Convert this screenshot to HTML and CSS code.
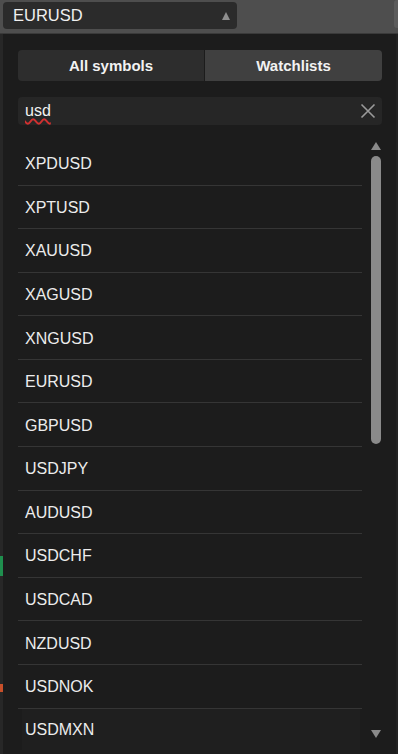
FILE: index.html
```html
<!DOCTYPE html>
<html>
<head>
<meta charset="utf-8">
<link rel="stylesheet" href="styles.css">
</head>
<body>
<div class="topbar">
  <div class="symbol-select">
    <span class="symbol-name">EURUSD</span>
    <span class="caret-up"></span>
  </div>
  <div class="topbar-right"></div>
</div>
<div class="page">
  <div class="edge">
    <span class="mark mark-green"></span>
    <span class="mark mark-orange"></span>
  </div>
  <div class="panel">
    <div class="tabs">
      <div class="tab tab-left">All symbols</div>
      <div class="tab tab-right">Watchlists</div>
    </div>
    <div class="search">
      <span class="query">usd</span>
      <svg class="clear" width="16" height="16" viewBox="0 0 16 16"><path d="M1.5 1.5 L14.5 14.5 M14.5 1.5 L1.5 14.5" stroke="#9a9a9a" stroke-width="1.6" fill="none"/></svg>
    </div>
    <div class="list-area">
      <div class="list">
        <div class="row">XPDUSD</div>
        <div class="row">XPTUSD</div>
        <div class="row">XAUUSD</div>
        <div class="row">XAGUSD</div>
        <div class="row">XNGUSD</div>
        <div class="row">EURUSD</div>
        <div class="row">GBPUSD</div>
        <div class="row">USDJPY</div>
        <div class="row">AUDUSD</div>
        <div class="row">USDCHF</div>
        <div class="row">USDCAD</div>
        <div class="row">NZDUSD</div>
        <div class="row">USDNOK</div>
        <div class="row row-last">USDMXN</div>
      </div>
      <div class="scrollbar">
        <span class="arrow-up"></span>
        <span class="thumb"></span>
        <span class="spacer"></span>
        <span class="arrow-down"></span>
      </div>
    </div>
  </div>
</div>
</body>
</html>
```
FILE: styles.css
```css
html, body {
  margin: 0;
  padding: 0;
  width: 398px;
  height: 754px;
  overflow: hidden;
  background: #1c1c1c;
  font-family: "Liberation Sans", Arial, sans-serif;
}
.topbar {
  height: 34px;
  background: #4e4e4e;
  display: flex;
  align-items: flex-start;
  padding: 2px 0 0 3px;
  box-sizing: border-box;
  border-bottom: 1px solid #3a3a3a;
}
.symbol-select {
  width: 234px;
  height: 27px;
  background: #2b2b2b;
  border-radius: 4px;
  display: flex;
  align-items: center;
  justify-content: space-between;
  padding: 0 7px 0 10px;
  box-sizing: border-box;
}
.symbol-name {
  color: #f0f0f0;
  font-size: 16.5px;
}
.caret-up {
  width: 0;
  height: 0;
  border-left: 4.5px solid transparent;
  border-right: 4.5px solid transparent;
  border-bottom: 8px solid #8e8e8e;
  margin-top: 1px;
}
.topbar-right {
  margin-left: auto;
  width: 4px;
  height: 28px;
  margin-top: -2px;
  background: #5c5c5c;
  border-radius: 3px 0 0 3px;
}
.page {
  display: flex;
  height: 720px;
}
.edge {
  width: 3px;
  background: #272727;
  display: flex;
  flex-direction: column;
}
.mark {
  display: block;
  width: 3px;
}
.mark-green {
  background: #1f8f4e;
  height: 20px;
  margin-top: 522px;
}
.mark-orange {
  background: #c8502a;
  height: 8px;
  margin-top: 108px;
}
.panel {
  flex: 1;
  background: #1c1c1c;
  padding: 16px 14px 0 15px;
  box-sizing: border-box;
  border-right: 2px solid #222;
  display: flex;
  flex-direction: column;
}
.tabs {
  display: grid;
  grid-template-columns: 186px 1fr;
  gap: 1px;
  height: 31px;
  background: #1c1c1c;
}
.tab {
  display: flex;
  align-items: center;
  justify-content: center;
  color: #f2f2f2;
  font-size: 15px;
  font-weight: bold;
}
.tab-left {
  background: #2d2d2d;
  border-radius: 4px 0 0 4px;
}
.tab-right {
  background: #404040;
  border-radius: 0 4px 4px 0;
}
.search {
  margin-top: 16px;
  height: 28px;
  background: #262626;
  border-radius: 4px;
  display: flex;
  align-items: center;
  justify-content: space-between;
  padding: 0 6px 0 7px;
}
.query {
  color: #f2f2f2;
  font-size: 16px;
  text-decoration: underline wavy #d23030;
  text-decoration-thickness: 1.5px;
  text-underline-offset: 2px;
}
.clear {
  display: block;
}
.list-area {
  margin-top: 17px;
  display: flex;
  flex: 1;
  min-height: 0;
}
.list {
  width: 344px;
  display: flex;
  flex-direction: column;
}
.row {
  height: 43.58px;
  box-sizing: border-box;
  border-bottom: 1px solid #353535;
  display: flex;
  align-items: center;
  padding: 2px 0 0 7px;
  color: #ececec;
  font-size: 16px;
  flex-shrink: 0;
}
.row-last {
  border-bottom: none;
  height: 41px;
  background: #1f1f1f;
  margin-left: 4px;
  padding-left: 3px;
  margin-right: 2px;
}
.scrollbar {
  width: 12px;
  margin-left: 8px;
  display: flex;
  flex-direction: column;
  align-items: center;
  padding-top: 0;
}
.arrow-up {
  width: 0;
  height: 0;
  border-left: 5px solid transparent;
  border-right: 5px solid transparent;
  border-bottom: 8px solid #8a8a8a;
}
.thumb {
  display: block;
  width: 10px;
  height: 288px;
  margin-top: 6px;
  background: #8a8a8a;
  border-radius: 5px;
}
.spacer {
  flex: 1;
}
.arrow-down {
  width: 0;
  height: 0;
  border-left: 5px solid transparent;
  border-right: 5px solid transparent;
  border-top: 8px solid #8a8a8a;
  margin-bottom: 16px;
}
```
